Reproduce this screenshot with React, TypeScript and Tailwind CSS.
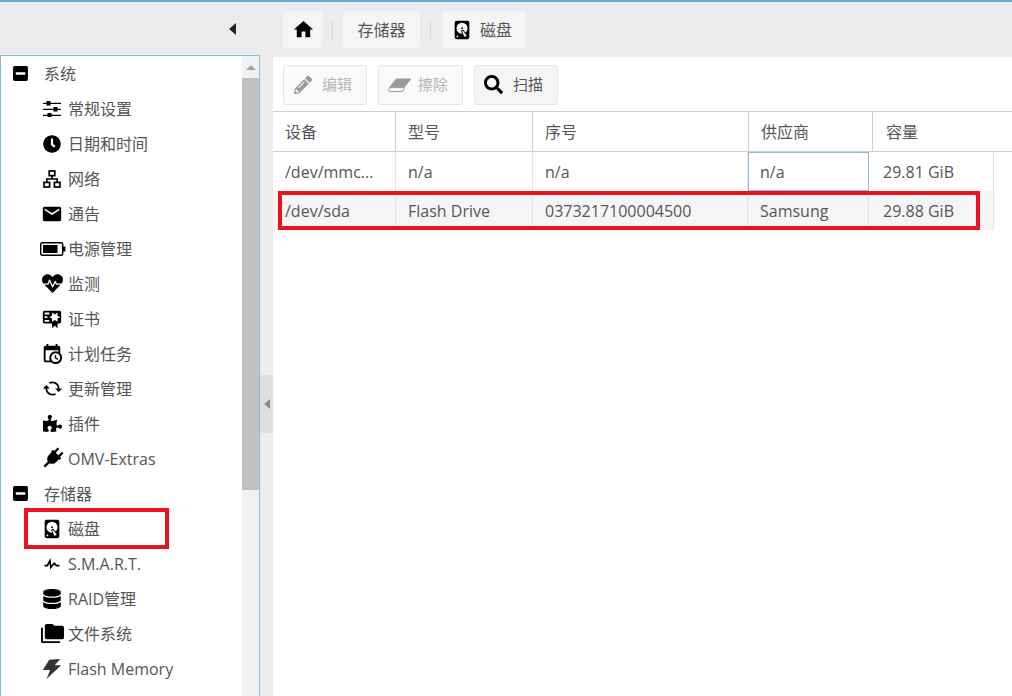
import { ReactNode } from "react";
import { FaClock, FaDatabase, FaHeartbeat, FaMinusSquare, FaPencilAlt, FaPuzzlePiece, FaSearch } from "react-icons/fa";
import { MdCached, MdEmail, MdHome } from "react-icons/md";

const Mdi = ({ d, className = "size-[18px]" }: { d: string; className?: string }) => (
  <svg viewBox="0 0 24 24" fill="currentColor" className={className}>
    <path d={d} />
  </svg>
);

const harddisk =
  "M6,2H18A2,2 0 0,1 20,4V20A2,2 0 0,1 18,22H6A2,2 0 0,1 4,20V4A2,2 0 0,1 6,2M12,4A6,6 0 0,0 6,10C6,13.31 8.69,16 12.1,16L11.22,13.77C10.95,13.29 11.11,12.68 11.59,12.4L12.45,11.9C12.93,11.63 13.54,11.79 13.82,12.27L15.74,14.69C17.12,13.59 18,11.9 18,10A6,6 0 0,0 12,4M12,9A1,1 0 0,1 13,10A1,1 0 0,1 12,11A1,1 0 0,1 11,10A1,1 0 0,1 12,9M7,18A1,1 0 0,0 6,19A1,1 0 0,0 7,20A1,1 0 0,0 8,19A1,1 0 0,0 7,18M12.09,13.27L14.58,19.58L17.17,18.08L12.95,12.77L12.09,13.27Z";

const Tune = () => (
  <svg viewBox="0 0 18 16" fill="currentColor" className="h-[16px] w-[18px] shrink-0">
    <path d="M0 1.7h18v1.3H0zM0 7.7h18v1.3H0zM0 13.7h18v1.3H0z" />
    <path d="M3.5 0h4v4.6h-4zM10.5 6h4v4.6h-4zM4.5 12h4v4h-4z" />
  </svg>
);

const Network = () => (
  <svg viewBox="0 0 18 18" fill="none" stroke="currentColor" strokeWidth="1.7" className="size-[18px]">
    <rect x="6.2" y="1" width="5.6" height="4.6" />
    <rect x="1" y="12.4" width="5.6" height="4.6" />
    <rect x="11.4" y="12.4" width="5.6" height="4.6" />
    <path d="M9 5.6V9M3.8 12.4V9H14.2V12.4" />
  </svg>
);

const Battery = () => (
  <svg viewBox="0 0 26 14" className="ml-[2px] h-[14px] w-[26px] shrink-0">
    <rect x="0.7" y="0.7" width="22" height="12.6" rx="1.5" fill="none" stroke="currentColor" strokeWidth="1.4" />
    <rect x="3" y="3" width="14.5" height="8" fill="currentColor" />
    <path d="M23 4.5h2.4v5H23z" fill="currentColor" />
  </svg>
);

const Plug = () => (
  <svg viewBox="0 0 24 24" fill="currentColor" className="size-[29px] shrink-0">
    <g transform="rotate(45 12 12)">
      <path d="M8.6 2.5h1.9v4.2h3V2.5h1.9v4.2H17v2h-.8v3.4c0 2.2-1.6 4-3.2 4.4v5h-2v-5c-1.6-.4-3.2-2.2-3.2-4.4V8.7H7v-2h1.6z" />
    </g>
  </svg>
);

const Eraser = () => (
  <svg viewBox="0 0 24 14" className="ml-[9px] mr-[6px] h-[14px] w-[24px] shrink-0">
    <path d="M8 .5h15.5L17 9H1.5z" fill="#9a9a9a" />
    <path d="M1.5 9.6h15l-2 3.9H1.5C.6 13.5.2 12.6.7 11.7z" fill="none" stroke="#9a9a9a" strokeWidth="1" />
  </svg>
);

type Item = { label: string; icon: ReactNode };

const system: Item[] = [
  { label: "常规设置", icon: <Tune /> },
  { label: "日期和时间", icon: <FaClock size={18} /> },
  { label: "网络", icon: <Network /> },
  { label: "通告", icon: <MdEmail size={22} /> },
  { label: "电源管理", icon: <Battery /> },
  { label: "监测", icon: <FaHeartbeat size={21} /> },
  {
    label: "证书",
    icon: (
      <Mdi
        className="size-[22px]"
        d="M4,3C2.89,3 2,3.89 2,5V15A2,2 0 0,0 4,17H12V22L15,19L18,22V17H20A2,2 0 0,0 22,15V8L22,6V5A2,2 0 0,0 20,3H16V3H4M12,5L15,7L18,5V8.5L21,10L18,11.5V15L15,13L12,15V11.5L9,10L12,8.5V5M4,5H9V7H4V5M4,9H7V11H4V9M4,13H9V15H4V13Z"
      />
    ),
  },
  {
    label: "计划任务",
    icon: (
      <Mdi
        className="size-[22px]"
        d="M15,13H16.5V15.82L18.94,17.23L18.19,18.53L15,16.69V13M19,8H5V19H9.67C9.24,18.09 9,17.07 9,16A7,7 0 0,1 16,9C17.07,9 18.09,9.24 19,9.67V8M5,21C3.89,21 3,20.1 3,19V5C3,3.89 3.89,3 5,3H6V1H8V3H16V1H18V3H19A2,2 0 0,1 21,5V11.1C22.24,12.36 23,14.09 23,16A7,7 0 0,1 16,23C14.09,23 12.36,22.24 11.1,21H5M16,11.15A4.85,4.85 0 0,0 11.15,16C11.15,18.68 13.32,20.85 16,20.85A4.85,4.85 0 0,0 20.85,16C20.85,13.32 18.68,11.15 16,11.15Z"
      />
    ),
  },
  { label: "更新管理", icon: <MdCached size={21} className="-scale-x-100" /> },
  { label: "插件", icon: <FaPuzzlePiece size={19} /> },
  { label: "OMV-Extras", icon: <Plug /> },
];

const storage: Item[] = [
  { label: "磁盘", icon: <Mdi className="size-[22px]" d={harddisk} /> },
  {
    label: "S.M.A.R.T.",
    icon: <Mdi className="size-[20px]" d="M3,13H5.79L10.1,4.79L11.28,13.75L14.5,9.66L17.83,13H21V15H17L14.67,12.67L9.92,18.73L8.94,11.31L7,15H3V13Z" />,
  },
  { label: "RAID管理", icon: <FaDatabase size={20} /> },
  {
    label: "文件系统",
    icon: <Mdi className="size-[23px] shrink-0" d="M22,4H14L12,2H6A2,2 0 0,0 4,4V16A2,2 0 0,0 6,18H22A2,2 0 0,0 24,16V6A2,2 0 0,0 22,4M2,6H0V11H0V20A2,2 0 0,0 2,22H20V20H2V6Z" />,
  },
  { label: "Flash Memory", icon: <Mdi className="size-[22px] shrink-0 text-[#333]" d="M9 2L21 1L15 8L22 8L6 23L10 13L2 13Z" /> },
];

function Group({ label }: { label: string }) {
  return (
    <div className="flex h-[35px] items-center pl-[11px]">
      <FaMinusSquare size={17} className="text-black" />
      <span className="ml-[15px]">{label}</span>
    </div>
  );
}

function Leaf({ item }: { item: Item }) {
  return (
    <div className="flex h-[35px] items-center pl-[39px]">
      <span className="flex w-[28px] shrink-0 items-center justify-center pr-[4px] text-black">{item.icon}</span>
      <span>{item.label}</span>
    </div>
  );
}

function Sidebar() {
  return (
    <div className="flex h-full w-[260px] shrink-0 flex-col">
      <div className="flex h-[53px] shrink-0 items-center justify-end pr-[24px]">
        <span className="h-0 w-0 border-y-[6px] border-r-[7px] border-y-transparent border-r-[#222]" />
      </div>
      <div className="relative flex flex-1 overflow-hidden border border-b-0 border-[#8dbdd8] bg-white">
        <div className="flex-1">
          <Group label="系统" />
          {system.map((item) => (
            <Leaf key={item.label} item={item} />
          ))}
          <Group label="存储器" />
          {storage.map((item) => (
            <Leaf key={item.label} item={item} />
          ))}
        </div>
        <div className="flex w-[17px] shrink-0 flex-col bg-[#f1f1f1]">
          <div className="flex h-[22px] items-center justify-center">
            <span className="h-0 w-0 border-x-[5px] border-b-[5px] border-x-transparent border-b-[#a3a3a3]" />
          </div>
          <div className="h-[412px] bg-[#c1c1c1]" />
        </div>
        <div className="absolute left-[23px] top-[452px] h-[41px] w-[145px] border-[4px] border-[#e8131f]" />
      </div>
    </div>
  );
}

function Crumb({ children, className = "" }: { children: ReactNode; className?: string }) {
  return <div className={`flex h-[37px] items-center rounded-[3px] bg-[#f5f5f5] ${className}`}>{children}</div>;
}

function ToolButton({ icon, label, enabled, className = "" }: { icon: ReactNode; label: string; enabled?: boolean; className?: string }) {
  return (
    <div
      className={`flex h-[40px] items-center rounded-[3px] border border-[#e6e6e6] text-[15px] ${className} ${
        enabled ? "bg-[#f5f5f5] text-[#555]" : "bg-[#fafafa] text-[#b5b5b5]"
      }`}
    >
      {icon}
      <span>{label}</span>
    </div>
  );
}

const rows = [
  ["/dev/mmc...", "n/a", "n/a", "n/a", "29.81 GiB"],
  ["/dev/sda", "Flash Drive", "0373217100004500", "Samsung", "29.88 GiB"],
];

const headers = ["设备", "型号", "序号", "供应商", "容量"];

function DiskTable() {
  return (
    <div className="relative">
      <div className="grid h-[41px] grid-cols-[123px_137px_216px_124px_1fr] border-y border-[#d0d0d0]">
        {headers.map((h, i) => (
          <div key={h} className={`flex items-center px-[12px] ${i < 4 ? "border-r border-[#d0d0d0]" : "pl-[13px]"}`}>
            {h}
          </div>
        ))}
      </div>
      {rows.map((row, r) => (
        <div
          key={row[0]}
          className={`grid h-[39px] w-[721px] grid-cols-[123px_137px_215px_121px_1fr] border-r border-[#e4e4e4] ${r === 1 ? "bg-[#f5f5f5]" : ""}`}
        >
          {row.map((cell, i) => (
            <div
              key={i}
              className={`flex items-center whitespace-nowrap ${
                r === 0 && i === 3 ? "border border-[#8dbdd8] px-[11px]" : i < 4 ? "border-r border-[#e4e4e4] px-[12px]" : "pl-[14px]"
              }`}
            >
              {cell}
            </div>
          ))}
        </div>
      ))}
      <div className="absolute left-[5px] top-[80px] h-[39px] w-[702px] border-[4px] border-[#e8131f]" />
    </div>
  );
}

export default function App() {
  return (
    <div
      className="flex h-[696px] w-[1012px] overflow-hidden border-t-2 border-[#6aa9d6] bg-[#ececec] text-[16px] text-[#555]"
      style={{ fontFamily: '"Open Sans", "Noto Sans CJK SC", sans-serif' }}
    >
      <Sidebar />
      <div className="flex w-[13px] shrink-0 flex-col pt-[373px]">
        <div className="flex h-[58px] w-full items-center justify-center bg-[#e0e0e0]">
          <span className="h-0 w-0 border-y-[5px] border-r-[6px] border-y-transparent border-r-[#8a8a8a]" />
        </div>
      </div>
      <div className="flex min-w-0 flex-1 flex-col">
        <div className="flex h-[55px] shrink-0 items-start gap-[10px] pl-[10px] pt-[9px]">
          <Crumb className="w-[39px] justify-center pl-[2px] text-black">
            <MdHome size={23} />
          </Crumb>
          <span className="mt-[9px] h-[19px] w-px bg-[#d8d8d8]" />
          <Crumb className="w-[77px] justify-center">存储器</Crumb>
          <span className="mt-[9px] h-[19px] w-px bg-[#d8d8d8]" />
          <Crumb className="ml-px w-[84px] pl-[9px] text-black">
            <Mdi className="size-[22px]" d={harddisk} />
            <span className="ml-[7px] text-[#555]">磁盘</span>
          </Crumb>
        </div>
        <div className="flex-1 bg-white">
          <div className="flex h-[54px] items-center gap-[11px] pl-[10px] pt-[1px]">
            <ToolButton className="w-[84px]" label="编辑" icon={<FaPencilAlt size={18} className="ml-[10px] mr-[10px] text-[#9a9a9a]" />} />
            <ToolButton className="w-[85px]" label="擦除" icon={<Eraser />} />
            <ToolButton className="w-[84px]" enabled label="扫描" icon={<FaSearch size={19} className="ml-[9px] mr-[10px] text-black" />} />
          </div>
          <DiskTable />
        </div>
      </div>
    </div>
  );
}
